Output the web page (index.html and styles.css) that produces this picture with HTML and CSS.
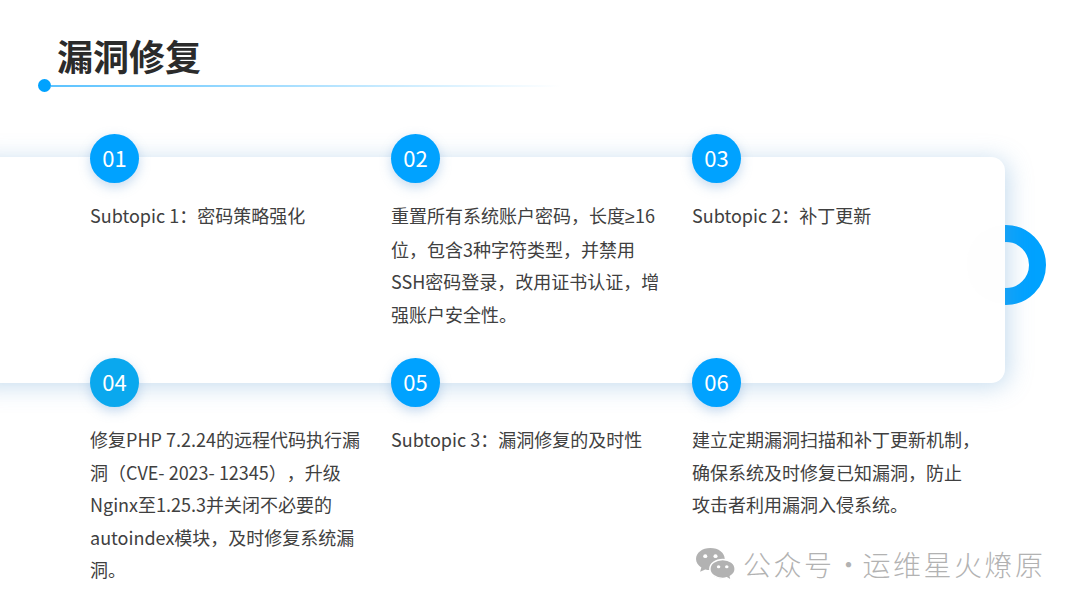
FILE: index.html
```html
<!DOCTYPE html>
<html lang="zh-CN">
<head>
<meta charset="utf-8">
<title>漏洞修复</title>
<link rel="stylesheet" href="styles.css">
</head>
<body>
<main class="slide">
  <div class="ring"></div>
  <div class="panel"></div>
  <div class="ring-ghost"></div>
  <header class="head">
    <h1 class="title">漏洞修复</h1>
    <div class="rule"><span class="rule-dot"></span><span class="rule-line"></span></div>
  </header>
  <section class="grid">
    <article class="item"><div class="num">01</div><p class="text">Subtopic 1：密码策略强化</p></article>
    <article class="item"><div class="num">02</div><p class="text">重置所有系统账户密码，长度<span class="latin">≥</span>16<br>位，包含3种字符类型，并禁用<br>SSH密码登录，改用证书认证，增<br>强账户安全性。</p></article>
    <article class="item"><div class="num">03</div><p class="text">Subtopic 2：补丁更新</p></article>
    <article class="item"><div class="num alt">04</div><p class="text">修复PHP 7.2.24的远程代码执行漏<br>洞（CVE- 2023- 12345），升级<br>Nginx至1.25.3并关闭不必要的<br>autoindex模块，及时修复系统漏<br>洞。</p></article>
    <article class="item"><div class="num">05</div><p class="text">Subtopic 3：漏洞修复的及时性</p></article>
    <article class="item"><div class="num">06</div><p class="text">建立定期漏洞扫描和补丁更新机制，<br>确保系统及时修复已知漏洞，防止<br>攻击者利用漏洞入侵系统。</p></article>
  </section>
  <aside class="mark">
    <svg class="mark-icon" viewBox="0 0 40 38" width="41" height="35" preserveAspectRatio="none" aria-hidden="true">
      <path fill="#b2b2b2" d="M15 1C7 1 1 6.300 1 13c0 3.800 2 7 5.200 9.200L5 27l5-2.700c1.500.4 3 .7 5 .7 8 0 14-5.300 14-12S23 1 15 1z"/>
      <circle cx="10" cy="10" r="2" fill="#fff"/>
      <circle cx="20" cy="10" r="2" fill="#fff"/>
      <path fill="#b2b2b2" stroke="#fff" stroke-width="1.500" d="M27 13.500c-7 0-12.500 4.600-12.500 10.300S20 34 27 34c1.500 0 2.800-.2 4-.6l4.500 3-1-4.600c2.800-1.900 4.700-4.800 4.700-8C39.200 18.100 34 13.500 27 13.500z"/>
      <circle cx="23" cy="21.500" r="1.700" fill="#fff"/>
      <circle cx="31" cy="21.500" r="1.700" fill="#fff"/>
    </svg>
    <span class="mark-text">公众号<span class="mark-sep">·</span>运维星火燎原</span>
  </aside>
</main>
</body>
</html>
```
FILE: styles.css
```css
* { box-sizing: border-box; }
html, body { margin: 0; padding: 0; background: #fff; }
.slide {
  position: relative;
  width: 1080px;
  height: 608px;
  overflow: hidden;
  background: #fff;
  font-family: "Noto Sans CJK SC", "Noto Sans", sans-serif;
  color: #404040;
  text-spacing-trim: space-all;
}
.head { position: relative; padding: 30px 0 0 38px; }
.title {
  margin: 0 0 0 19px;
  font-size: 36px;
  line-height: 50px;
  font-weight: 700;
  color: #2b2b2b;
}
.rule { display: flex; align-items: center; height: 13px; margin-top: -1px; }
.rule-dot { width: 13px; height: 13px; border-radius: 50%; background: #00a2ff; flex: none; }
.rule-line {
  width: 510px;
  height: 2px;
  background: linear-gradient(90deg, #5cc3ff, #ffffff);
}
.panel {
  position: absolute;
  left: -30px;
  top: 157px;
  width: 1035px;
  height: 226px;
  background: #fff;
  border-radius: 14px;
  box-shadow: 3px 3px 24px rgba(100, 160, 210, .38);
}
.ring {
  position: absolute;
  left: 966px;
  top: 225px;
  width: 80px;
  height: 80px;
  border-radius: 50%;
  border: 17px solid #00a2ff;
}
.ring-ghost {
  position: absolute;
  left: 967px;
  top: 225px;
  width: 38px;
  height: 79px;
  border-radius: 40px 0 0 40px;
  background: #fefefe;
}
.grid {
  position: relative;
  display: grid;
  grid-template-columns: repeat(3, 271px);
  column-gap: 30px;
  grid-template-rows: 224px 224px;
  margin: 42px 0 0 90px;
}
.num {
  width: 49px;
  height: 49px;
  border-radius: 50%;
  background: #00a2ff;
  color: #fff;
  font-size: 22px;
  line-height: 46px;
  text-align: center;
  box-shadow: 0 4px 12px rgba(90, 150, 210, .35);
}
.num.alt { background: #0aa8ee; }
.text {
  margin: 16px 0 0;
  font-size: 18px;
  line-height: 32.500px;
  color: #404040;
  white-space: nowrap;
}
.latin { font-family: "Noto Sans", sans-serif; }
.mark {
  position: absolute;
  left: 695px;
  top: 546px;
  display: flex;
  align-items: center;
  gap: 7px;
  color: #b2b2b2;
}
.mark-text { font-size: 28px; line-height: 36px; letter-spacing: 2.500px; white-space: nowrap; font-weight: 300; }
.mark-sep { display: inline-block; width: 27px; text-align: center; margin-right: 1px; }
```
